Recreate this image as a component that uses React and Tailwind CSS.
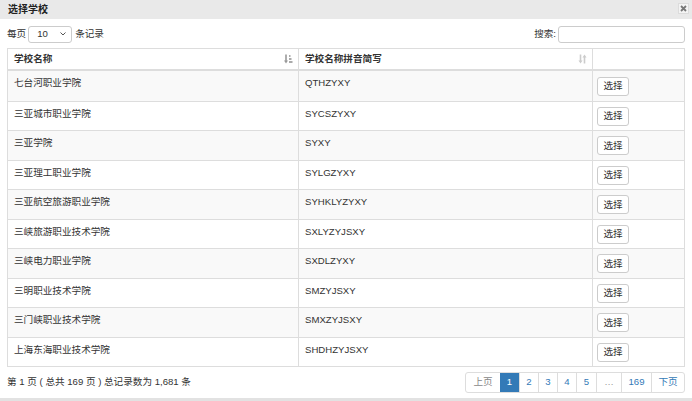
import React from "react";

const rows = [
  ["七台河职业学院", "QTHZYXY"],
  ["三亚城市职业学院", "SYCSZYXY"],
  ["三亚学院", "SYXY"],
  ["三亚理工职业学院", "SYLGZYXY"],
  ["三亚航空旅游职业学院", "SYHKLYZYXY"],
  ["三峡旅游职业技术学院", "SXLYZYJSXY"],
  ["三峡电力职业学院", "SXDLZYXY"],
  ["三明职业技术学院", "SMZYJSXY"],
  ["三门峡职业技术学院", "SMXZYJSXY"],
  ["上海东海职业技术学院", "SHDHZYJSXY"],
];

function SortAsc() {
  return (
    <svg width="9" height="10" viewBox="0 0 9 10" className="shrink-0">
      <path d="M2 0.5v7" stroke="#999" strokeWidth="1.6" />
      <path d="M0 6.5l2 3 2-3z" fill="#999" />
      <rect x="5" y="1" width="1.5" height="2" fill="#aaa" />
      <rect x="5" y="4" width="2.5" height="2" fill="#aaa" />
      <rect x="5" y="7" width="3.5" height="2" fill="#aaa" />
    </svg>
  );
}

function SortBoth() {
  return (
    <svg width="9" height="10" viewBox="0 0 9 10" className="shrink-0">
      <path d="M2.5 0.5v7" stroke="#ccc" strokeWidth="1.6" />
      <path d="M0.5 6.5l2 3 2-3z" fill="#ccc" />
      <path d="M6.5 9.5v-7" stroke="#ccc" strokeWidth="1.6" />
      <path d="M4.5 3.5l2-3 2 3z" fill="#ccc" />
    </svg>
  );
}

export default function App() {
  return (
    <div
      className="w-[692px] h-[401px] bg-white text-[#333] text-[9.6px] flex flex-col overflow-hidden"
      style={{ fontFamily: '"Liberation Sans", "Noto Sans CJK SC", sans-serif' }}
    >
      <div className="h-[19px] bg-[#e9e9e9] flex items-center justify-between pl-[8px] pr-[3px] shrink-0">
        <span className="font-bold text-[10px] text-[#222]">选择学校</span>
        <div className="w-[11px] h-[11px] bg-[#f4f4f4] border border-[#dcdcdc] flex items-center justify-center mt-[-2px]">
          <svg width="7" height="7" viewBox="0 0 7 7">
            <path d="M1 1l5 5M6 1l-5 5" stroke="#777" strokeWidth="1.8" />
          </svg>
        </div>
      </div>

      <div className="flex-1 flex flex-col px-[7px]">
        <div className="h-[29px] flex items-center justify-between pt-[1px]">
          <div className="flex items-center">
            <span>每页</span>
            <div className="ml-[2px] w-[44px] h-[17px] border border-[#ccc] rounded-[3px] flex items-center justify-between pl-[8px] pr-[5px]">
              <span>10</span>
              <svg width="6" height="4" viewBox="0 0 6 4">
                <path d="M0.5 0.5l2.5 2.5 2.5-2.5" stroke="#555" strokeWidth="1" fill="none" />
              </svg>
            </div>
            <span className="ml-[3px]">条记录</span>
          </div>
          <div className="flex items-center">
            <span>搜索:</span>
            <div className="ml-[2px] w-[127px] h-[17px] border border-[#ccc] rounded-[3px]" />
          </div>
        </div>

        <div className="border border-[#ddd] flex flex-col">
          <div className="h-[22px] flex border-b-2 border-[#ddd] font-bold">
            <div className="w-[291px] border-r border-[#ddd] flex items-center justify-between pl-[6px] pr-[5px]">
              <span>学校名称</span>
              <SortAsc />
            </div>
            <div className="w-[294px] border-r border-[#ddd] flex items-center justify-between pl-[6px] pr-[5px]">
              <span>学校名称拼音简写</span>
              <SortBoth />
            </div>
            <div className="flex-1" />
          </div>
          {rows.map(([name, code], i) => (
            <div
              key={code}
              className={`h-[29.5px] flex ${i > 0 ? "border-t border-[#ddd]" : ""} ${i % 2 === 0 ? "bg-[#f9f9f9]" : "bg-white"}`}
            >
              <div className="w-[291px] border-r border-[#ddd] pl-[6px] pt-[5px] leading-[14px]">{name}</div>
              <div className="w-[294px] border-r border-[#ddd] pl-[6px] pt-[5px] leading-[14px]">{code}</div>
              <div className="flex-1 flex items-center pl-[4px] pt-[1px]">
                <div className="w-[32px] h-[19px] bg-white border border-[#ccc] rounded-[3px] flex items-center justify-center text-[#333]">
                  选择
                </div>
              </div>
            </div>
          ))}
        </div>

        <div className="flex items-center justify-between mt-[5px]">
          <span>第 1 页 ( 总共 169 页 ) 总记录数为 1,681 条</span>
          <div className="flex h-[21px] border border-[#ddd] rounded-[3px] overflow-hidden">
            <div className="w-[34px] flex items-center justify-center text-[#888]">上页</div>
            <div className="w-[19px] flex items-center justify-center bg-[#337ab7] text-white">1</div>
            <div className="w-[19px] flex items-center justify-center text-[#337ab7] border-l border-[#ddd]">2</div>
            <div className="w-[19px] flex items-center justify-center text-[#337ab7] border-l border-[#ddd]">3</div>
            <div className="w-[19px] flex items-center justify-center text-[#337ab7] border-l border-[#ddd]">4</div>
            <div className="w-[20px] flex items-center justify-center text-[#337ab7] border-l border-[#ddd]">5</div>
            <div className="w-[25px] flex items-center justify-center text-[#999] border-l border-[#ddd]">…</div>
            <div className="w-[30px] flex items-center justify-center text-[#337ab7] border-l border-[#ddd]">169</div>
            <div className="w-[33px] flex items-center justify-center text-[#337ab7] border-l border-[#ddd]">下页</div>
          </div>
        </div>
      </div>
      <div className="h-[3px] bg-[#e2e2e2] shrink-0" />
    </div>
  );
}
